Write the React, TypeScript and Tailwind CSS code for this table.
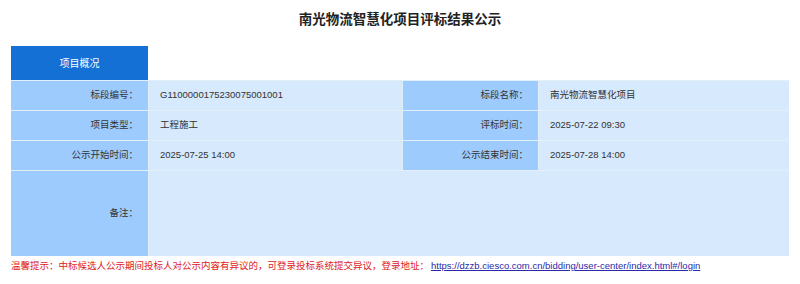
import React from 'react';

const rows: [string, string, string, string][] = [
  ['标段编号：', 'G1100000175230075001001', '标段名称：', '南光物流智慧化项目'],
  ['项目类型：', '工程施工', '评标时间：', '2025-07-22 09:30'],
  ['公示开始时间：', '2025-07-25 14:00', '公示结束时间：', '2025-07-28 14:00'],
];

const App: React.FC = () => {
  return (
    <div className="w-[800px] h-[284px] bg-white px-[11px] text-[#333] font-['Liberation_Sans','Noto_Sans_CJK_SC',sans-serif]">
      <h1 className="h-[46px] pt-[11px] text-center text-[13.5px] font-bold leading-[18px] text-[#222]">
        南光物流智慧化项目评标结果公示
      </h1>

      {/* tab */}
      <div className="flex">
        <div className="w-[137px] h-[34px] bg-[#1570d6] text-white text-[10px] flex items-center justify-center">
          项目概况
        </div>
      </div>

      {/* info grid */}
      <div className="grid grid-cols-[137px_253px_135px_1fr] gap-px bg-[#e3eefb] border-t border-[#e3eefb] text-[9.5px]">
        {rows.map((r, i) => (
          <React.Fragment key={i}>
            <div className="h-[29px] bg-[#9ecbfd] flex items-center justify-end pr-[10px]">{r[0]}</div>
            <div className="h-[29px] bg-[#d6e9fd] flex items-center pl-[11px]">{r[1]}</div>
            <div className="h-[29px] bg-[#9ecbfd] flex items-center justify-end pr-[10px]">{r[2]}</div>
            <div className="h-[29px] bg-[#d6e9fd] flex items-center pl-[11px]">{r[3]}</div>
          </React.Fragment>
        ))}
        <div className="h-[85px] bg-[#9ecbfd] flex items-center justify-end pr-[10px]">备注：</div>
        <div className="h-[85px] bg-[#d6e9fd] col-span-3"></div>
      </div>

      <p className="mt-[3px] text-[9.5px] leading-[14px] text-[#e0201c] whitespace-nowrap">
        温馨提示：中标候选人公示期间投标人对公示内容有异议的，可登录投标系统提交异议，登录地址：
        <a href="#" className="text-[#2a2aa8] underline ml-[2px]">
          https://dzzb.ciesco.com.cn/bidding/user-center/index.html#/login
        </a>
      </p>
    </div>
  );
};

export default App;
